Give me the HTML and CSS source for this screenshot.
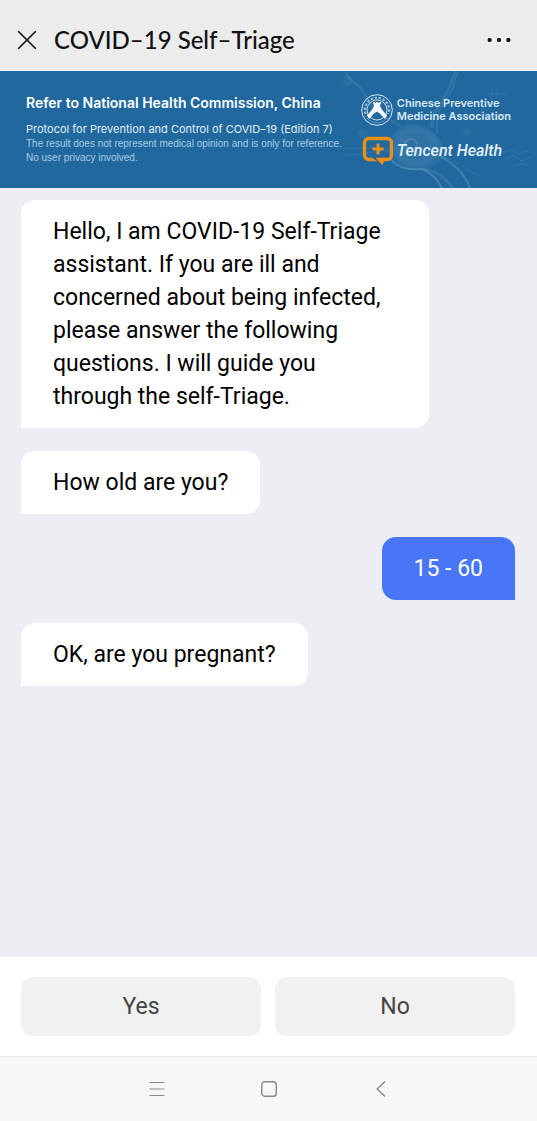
FILE: index.html
```html
<!DOCTYPE html>
<html lang="en">
<head>
<meta charset="utf-8">
<meta name="viewport" content="width=device-width, initial-scale=1">
<title>COVID–19 Self–Triage</title>
<link rel="stylesheet" href="styles.css">
</head>
<body>
<div class="app">
  <header class="topbar">
    <button class="icon-btn" aria-label="Close">
      <svg width="20" height="20" viewBox="0 0 20 20" fill="none" stroke="#111" stroke-width="1.6"><path d="M1.2 1.2 18.8 18.8M18.8 1.2 1.2 18.8"/></svg>
    </button>
    <h1 class="title">COVID–19 Self–Triage</h1>
    <button class="icon-btn" aria-label="More">
      <svg width="24" height="6" viewBox="0 0 24 6" fill="#000"><circle cx="2.6" cy="3" r="2.1"/><circle cx="12" cy="3" r="2.1"/><circle cx="21.4" cy="3" r="2.1"/></svg>
    </button>
  </header>

  <section class="banner">
    <svg class="banner-art" width="240" height="117" viewBox="297 0 240 117" fill="none" aria-hidden="true">
      <defs>
        <radialGradient id="cell"><stop offset="0" stop-color="#9cc6e0" stop-opacity=".08"/><stop offset=".75" stop-color="#9cc6e0" stop-opacity=".16"/><stop offset="1" stop-color="#9cc6e0" stop-opacity=".06"/></radialGradient>
      </defs>
      <path d="M389 74C392 60 402 50 416 53C432 56 446 70 443 84C440 98 421 101 408 98C396 95 386 88 389 74Z" fill="url(#cell)"/>
      <g stroke="#a9cde3" stroke-linecap="round">
        <path d="M346 2C350 11 360 13 364 22S374 39 385 46S395 52 400 55" stroke-width="2" opacity=".14"/>
        <path d="M455 1C451 12 449 20 443 29S432 41 432 56" stroke-width="3" opacity=".12"/>
        <path d="M458 1C453 12 455 18 446 29S437 44 437 62" stroke-width="1" opacity=".22"/>
        <path d="M336 76C355 80 375 75 390 78M344 84C365 84 376 79 389 80" stroke-width="1" opacity=".12"/>
        <path d="M390 88C398 98 412 99 422 98C432 102 438 109 442 117M437 83C450 91 464 100 470 117" stroke-width="2" opacity=".26"/>
        <path d="M425 98C437 100 448 110 453 117" stroke-width="3" opacity=".12"/>
        <path d="M442 86C458 89 463 98 478 104" stroke-width="1" opacity=".12"/>
        <ellipse cx="411" cy="73" rx="6" ry="5" stroke="#d9b3cf" stroke-width="2" opacity=".2"/>
        <g stroke-width="1" opacity=".12"><path d="M488 23h10M492 18v12M497 18l-1 9M500 23h7M503 82l10-4 5 5 9-3M505 89l9-5 7 6 10-4M515 95l8-3 6 3"/></g>
      </g>
      <g fill="#a9cde3" opacity=".08"><circle cx="348" cy="10" r="5"/><circle cx="363" cy="62" r="5"/><circle cx="467" cy="61" r="4"/></g>
    </svg>
    <div class="banner-text">
      <h2 class="banner-title">Refer to National Health Commission, China</h2>
      <p class="banner-sub">Protocol for Prevention and Control of COVID–19 (Edition 7)</p>
      <p class="banner-note">The result does not represent medical opinion and is only for reference.<br>No user privacy involved.</p>
    </div>
    <div class="partners">
      <div class="partner">
        <svg class="logo" width="32" height="34" viewBox="0 0 32 34" fill="none">
          <circle cx="16" cy="17" r="15.3" stroke="#d8e9f5" stroke-width="1"/>
          <path d="M4.600 21A12.100 12.100 0 1 1 27.400 21" stroke="#d8e9f5" stroke-width="2.200" stroke-dasharray="2.500 1.600" opacity=".65"/>
          <path d="M6 25A12.800 12.800 0 0 0 26 25" stroke="#d8e9f5" stroke-width="1" stroke-dasharray="1 .8" opacity=".6"/>
          <circle cx="16" cy="17" r="10" stroke="#d8e9f5" stroke-width=".9"/>
          <path d="M12 10.500V9h1.500v.8h1.600V9h1.800v.8h1.600V9H20v1.500l-.8 1v2l2 3.500 5 5.500-2.500 3.500-4.200-5-3.500-2.500-3.500 2.500-4.200 5L5.800 22.500l5-5.500 2-3.500v-2z" fill="#f3f9fd"/>
        </svg>
        <span class="assoc">Chinese Preventive<br>Medicine Association</span>
      </div>
      <div class="partner">
        <svg class="logo" width="32" height="30" viewBox="0 0 32 30" fill="none">
          <path d="M11.500 23.500H8A4.500 4.500 0 0 1 3.500 19V7A4.500 4.500 0 0 1 8 2.500h18A4.500 4.500 0 0 1 30.500 7v12a4.500 4.500 0 0 1-4.500 4.500h-9" stroke="#ee8f16" stroke-width="3.400"/>
          <path d="M11 21.800l5.500 3.400h-5zM14.500 21.800h10L21.500 29.200z" fill="#ee8f16"/>
          <path d="M17 7.500v11M11.500 13h11" stroke="#ee8f16" stroke-width="3"/>
        </svg>
        <span class="tencent">Tencent Health</span>
      </div>
    </div>
  </section>

  <main class="chat">
    <p class="bubble">Hello, I am COVID-19 Self-Triage assistant. If you are ill and concerned about being infected, please answer the following questions. I will guide you through the self-Triage.</p>
    <p class="bubble">How old are you?</p>
    <p class="bubble mine">15 - 60</p>
    <p class="bubble">OK, are you pregnant?</p>
  </main>

  <div class="answers">
    <button class="answer">Yes</button>
    <button class="answer">No</button>
  </div>

  <nav class="sysnav" aria-label="System">
    <button class="icon-btn" aria-label="Menu">
      <svg width="16" height="16" viewBox="0 0 16 16" fill="none" stroke="#8a8a8a" stroke-width="1.2"><path d="M.5 1.500h15M.5 8h15M.5 14.500h15"/></svg>
    </button>
    <button class="icon-btn" aria-label="Home">
      <svg width="16" height="16" viewBox="0 0 16 16" fill="none" stroke="#888" stroke-width="1.400"><rect x=".8" y=".8" width="14.400" height="14.400" rx="2.800"/></svg>
    </button>
    <button class="icon-btn" aria-label="Back">
      <svg width="16" height="16" viewBox="0 0 16 16" fill="none" stroke="#888" stroke-width="1.400"><path d="M12 .5 4.200 8l7.800 7.500"/></svg>
    </button>
  </nav>
</div>
</body>
</html>
```
FILE: styles.css
```css
* { box-sizing: border-box; }

body {
  margin: 0;
  font-family: Roboto, "Liberation Sans", sans-serif;
  color: #000;
}

h1, h2, p { margin: 0; }

button {
  border: 0;
  padding: 0;
  font: inherit;
  color: inherit;
  background: none;
}

.app {
  display: flex;
  flex-direction: column;
  min-height: 100vh;
  background: #edeef4;
}

.icon-btn { display: flex; }

.topbar {
  display: flex;
  align-items: center;
  gap: 17px;
  padding: 20px 26px 11px 17px;
  background: #ececec;
}

.title {
  flex: 1;
  font: 500 24px/40px Lato, sans-serif;
  color: #111;
}

.banner {
  position: relative;
  display: flex;
  justify-content: space-between;
  padding: 22px 26px;
  background: #20689e;
  color: #fff;
  font-family: Inter, sans-serif;
  overflow: hidden;
}

.banner-art {
  position: absolute;
  top: 0;
  right: 0;
}

.banner-text, .partners { position: relative; white-space: nowrap; }

.banner-title {
  margin-bottom: 8px;
  font-size: 14px;
  line-height: 20px;
  font-weight: 600;
}

.banner-sub {
  font-size: 11px;
  line-height: 16px;
  color: #e2eff8;
}

.banner-note {
  font: 10px/14px "Liberation Sans", sans-serif;
  color: #a9cbe4;
}

.partners {
  display: flex;
  flex-direction: column;
  gap: 9px;
}

.partner {
  display: flex;
  align-items: center;
  gap: 4px;
}

.assoc {
  font-size: 11px;
  line-height: 13px;
  font-weight: 600;
  color: #d9eaf6;
}

.tencent {
  font: italic 500 16px/20px Roboto, sans-serif;
  color: #e4f1fa;
}

.chat {
  flex: 1;
  display: flex;
  flex-direction: column;
  align-items: flex-start;
  gap: 23px;
  padding: 12px 22px 12px 21px;
}

.bubble {
  max-width: 408px;
  padding: 15px 32px;
  border-radius: 14px 14px 14px 0;
  background: #fff;
  font-size: 23px;
  line-height: 33px;
}

.mine {
  align-self: flex-end;
  border-radius: 14px 14px 0 14px;
  background: #4876f6;
  color: #fff;
}

.answers {
  display: flex;
  gap: 14px;
  padding: 20px 22px 20px 21px;
  background: #fff;
}

.answer {
  flex: 1;
  height: 59px;
  border-radius: 12px;
  background: #f1f1f1;
  font-size: 23px;
  color: #444;
}

.sysnav {
  display: flex;
  justify-content: center;
  gap: 96px;
  padding: 24px 0;
  border-top: 1px solid #e6e6e6;
  background: #f7f7f7;
}
```
